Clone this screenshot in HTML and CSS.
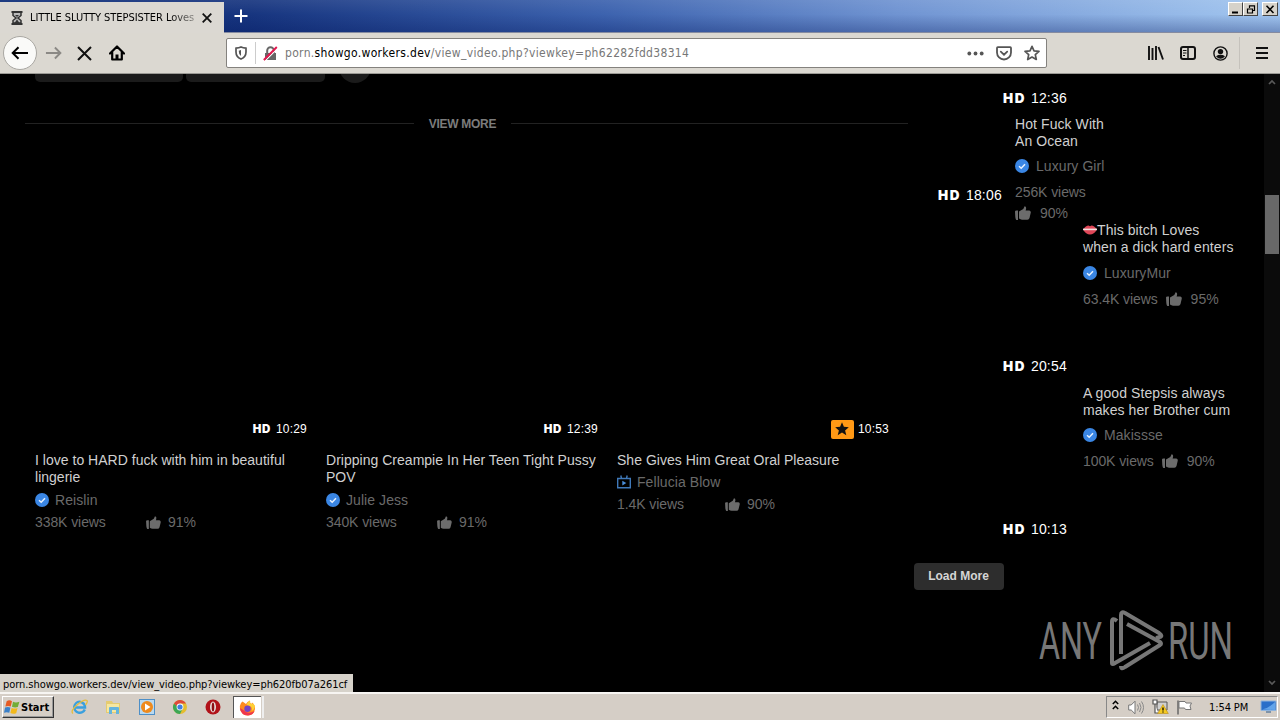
FILE: index.html
```html
<!DOCTYPE html>
<html lang="en">
<head>
<meta charset="utf-8">
<title>Browser</title>
<link rel="stylesheet" href="styles.css">
</head>
<body>
<svg width="0" height="0" class="defs">
  <defs>
    <symbol id="check" viewBox="0 0 14 14"><circle cx="7" cy="7" r="7" fill="#3a86e4"/><path d="M4 7.2l2.200 2L10 5.200" fill="none" stroke="#e8f2ff" stroke-width="1.500"/></symbol>
    <symbol id="thumb" viewBox="0 0 16 14"><path d="M0 5.500Q0 4.500 1.500 4.500H3V14H1.300Q.6 13.500.3 11zM4 5.600L8.300 3 9.600.3Q11.600.6 11 3.200L10.600 4.500H14.400Q16 5 15.800 6.600L14.500 12Q14 13.600 12.400 13.700H7Q5.500 13.400 4 12.600z" fill="#6c6c6c"/></symbol>
  </defs>
</svg>

<header class="titlebar">
  <div class="tab">
    <svg class="hourglass" width="12" height="14" viewBox="0 0 12 14"><path d="M.5 1h11M.5 13h11" stroke="#333" stroke-width="2"/><path d="M2 2v2.500L5 7 2 9.500V12h8V9.500L7 7l3-2.500V2" fill="#bbb" stroke="#333" stroke-width="1.500"/><path d="M4 4h4L6 6zM3.500 12L6 8.500 8.500 12z" fill="#333"/></svg>
    <span class="tab-title">LITTLE SLUTTY STEPSISTER Loves</span>
    <svg class="tab-close" width="10" height="10" viewBox="0 0 10 10"><path d="M.7.7l8.600 8.600M9.300.7L.7 9.300" stroke="#111" stroke-width="1.800"/></svg>
  </div>
  <svg class="newtab" width="14" height="14" viewBox="0 0 14 14"><path d="M7 .5v13M.5 7h13" stroke="#fff" stroke-width="2"/></svg>
  <div class="winbtns">
    <span class="wb"><svg width="10" height="9"><path d="M1 7.500h6" stroke="#000" stroke-width="2"/></svg></span>
    <span class="wb"><svg width="10" height="9"><path d="M3.500 3V.9h5V5.500H6.500M3 1h6M1 4h5.500M1.500 4v4h5V4z" fill="none" stroke="#000" stroke-width="1.200"/></svg></span>
    <span class="wb gap"><svg width="10" height="9"><path d="M1.500 .8l7 7.200M8.500 .8l-7 7.200" stroke="#000" stroke-width="1.600"/></svg></span>
  </div>
</header>

<nav class="toolbar">
  <span class="back"><svg width="18" height="14" viewBox="0 0 18 14"><path d="M17 7H2M7.500 1.200L1.700 7l5.800 5.800" fill="none" stroke="#000" stroke-width="2"/></svg></span>
  <svg class="fwd" width="17" height="14" viewBox="0 0 18 14"><path d="M1 7h15M10.500 1.200L16.300 7l-5.800 5.800" fill="none" stroke="#8b8985" stroke-width="2"/></svg>
  <svg class="stop" width="15" height="15" viewBox="0 0 15 15"><path d="M1 1l13 13M14 1L1 14" stroke="#111" stroke-width="2"/></svg>
  <svg class="home" width="16" height="16" viewBox="0 0 16 16"><path d="M1 8.500L8 1.500l7 7M3.200 7.500V14.500h9.600V7.500" fill="none" stroke="#000" stroke-width="2.200" stroke-linejoin="round" stroke-linecap="round"/><path d="M6.500 14V9.500h3V14" fill="#000"/></svg>
  <div class="urlbar">
    <svg class="shield" width="12" height="14" viewBox="0 0 12 14"><path d="M6 1Q8 2 11 2.200V6Q11 11 6 13 1 11 1 6V2.200Q4 2 6 1z" fill="none" stroke="#555" stroke-width="1.700"/><path d="M6 4v6Q3.700 8.500 3.700 4.700z" fill="#555"/></svg>
    <span class="sep"></span>
    <svg class="lock" width="15" height="15" viewBox="0 0 15 15"><path d="M2 7h11v7H2z" fill="#666"/><path d="M4.200 7V4.500a3.300 3.300 0 016.600 0V7" fill="none" stroke="#666" stroke-width="2"/><path d="M2.400 14.600L14.800 2.200" stroke="#fff" stroke-width="1.200"/><path d="M.8 14L13.800 1" stroke="#e2184f" stroke-width="1.900"/></svg>
    <span class="url">porn.<b>showgo.workers.dev</b>/view_video.php?viewkey=ph62282fdd38314</span>
    <svg class="dots" width="17" height="5" viewBox="0 0 17 5"><g fill="#555"><circle cx="2.300" cy="2.500" r="1.900"/><circle cx="8.500" cy="2.500" r="1.900"/><circle cx="14.700" cy="2.500" r="1.900"/></g></svg>
    <svg class="pocket" width="16" height="15" viewBox="0 0 16 15"><path d="M1.800 1.200h12.400q.8 0 .8.800v4.500a7 7 0 01-14 0V2q0-.8.800-.8z" fill="none" stroke="#555" stroke-width="1.800"/><path d="M4.800 5.700L8 8.700l3.200-3" fill="none" stroke="#555" stroke-width="1.800" stroke-linecap="round"/></svg>
    <svg class="star" width="16" height="16" viewBox="0 0 16 16"><path d="M8 1.300l2 4.500 5 .5-3.700 3.300 1 4.900L8 12l-4.300 2.500 1-4.900L1 6.300l5-.5z" fill="none" stroke="#555" stroke-width="1.700" stroke-linejoin="round"/></svg>
  </div>
  <svg class="library" width="16" height="14" viewBox="0 0 16 14"><path d="M1 0v14M4.500 2v12M8 0v14M10.500 1l4.500 12.500" stroke="#111" stroke-width="1.900"/></svg>
  <svg class="sidebars" width="16" height="14" viewBox="0 0 16 14"><rect x="1" y="1" width="14" height="12" rx="2" fill="none" stroke="#111" stroke-width="2"/><path d="M8 1v12" stroke="#111" stroke-width="1.500"/><path d="M3 4.500h3.500M3 7h3.500M3 9.500h2" stroke="#111"/></svg>
  <svg class="account" width="15" height="15" viewBox="0 0 15 15"><circle cx="7.500" cy="7.500" r="6.600" fill="none" stroke="#111" stroke-width="1.400"/><circle cx="7.500" cy="5.600" r="2.700" fill="#111"/><path d="M3 10.200Q5 8.800 7.500 8.800T12 10.200Q10 12.800 7.500 12.800T3 10.200z" fill="#111"/></svg>
  <span class="tsep"></span>
  <svg class="menu" width="12" height="12" viewBox="0 0 12 12"><path d="M0 1h12M0 6h12M0 11h12" stroke="#111" stroke-width="2"/></svg>
</nav>

<div class="viewport">
  <main class="page">
    <section class="videos">
      <div class="pills"><i class="p1"></i><i class="p2"></i><i class="p3"></i></div>
      <div class="viewmore"><hr><span>VIEW MORE</span><hr></div>
      <div class="cards">
        <article class="card">
          <div class="badge"><b>HD</b><time>10:29</time></div>
          <h3>I love to HARD fuck with him in beautiful<br>lingerie</h3>
          <div class="who"><svg width="14" height="14"><use href="#check"/></svg>Reislin</div>
          <div class="stats"><span class="n">338K views</span><svg width="15" height="13"><use href="#thumb"/></svg><span>91%</span></div>
        </article>
        <article class="card">
          <div class="badge"><b>HD</b><time>12:39</time></div>
          <h3>Dripping Creampie In Her Teen Tight Pussy<br>POV</h3>
          <div class="who"><svg width="14" height="14"><use href="#check"/></svg>Julie Jess</div>
          <div class="stats"><span class="n">340K views</span><svg width="15" height="13"><use href="#thumb"/></svg><span>91%</span></div>
        </article>
        <article class="card">
          <div class="badge"><span class="premium"><svg width="14" height="14" viewBox="0 0 14 14"><path d="M7 .3l1.900 4.500 4.900.4-3.700 3.200 1.200 4.800L7 10.600l-4.300 2.600 1.200-4.800L.2 5.200l4.900-.4z" fill="#111"/></svg></span><time>10:53</time></div>
          <h3>She Gives Him Great Oral Pleasure</h3>
          <div class="who tv"><svg width="14" height="14" viewBox="0 0 14 14"><path d="M.7 3.500h12.600v9.200H.7zM4.500 3.200L3.800.5M9.500 3.200l.7-2.700" fill="none" stroke="#3f78b8" stroke-width="1.400"/><path d="M5.300 5.700v4.800L9.300 8z" fill="#4b8fda"/></svg>Fellucia Blow</div>
          <div class="stats short"><span class="n">1.4K views</span><svg width="15" height="13"><use href="#thumb"/></svg><span>90%</span></div>
        </article>
      </div>
    </section>

    <aside class="related">
      <div class="badge first"><b>HD</b><time>12:36</time></div>
      <div class="pair">
        <div class="badge"><b>HD</b><time>18:06</time></div>
        <article class="item">
          <h3>Hot Fuck With<br>An Ocean</h3>
          <div class="who"><svg width="14" height="14"><use href="#check"/></svg>Luxury Girl</div>
          <div class="n">256K views</div>
          <div class="stats"><svg width="16" height="14"><use href="#thumb"/></svg><span>90%</span></div>
        </article>
      </div>
      <article class="item far">
        <h3><svg class="lips" width="14" height="10" viewBox="0 0 14 10"><path d="M0 4.500Q3 .5 5.500 .5L7 1.200 8.500.5Q11 .5 14 4.500 11 9.500 7 9.500T0 4.500z" fill="#df4657"/><path d="M0 4.400h14" stroke="#f4dede" stroke-width="1.600"/></svg>This bitch Loves<br>when a dick hard enters</h3>
        <div class="who low"><svg width="14" height="14"><use href="#check"/></svg>LuxuryMur</div>
        <div class="stats"><span class="n">63.4K views</span><svg width="16" height="14"><use href="#thumb"/></svg><span>95%</span></div>
      </article>
      <div class="badge second"><b>HD</b><time>20:54</time></div>
      <article class="item far">
        <h3>A good Stepsis always<br>makes her Brother cum</h3>
        <div class="who"><svg width="14" height="14"><use href="#check"/></svg>Makissse</div>
        <div class="stats"><span class="n">100K views</span><svg width="16" height="14"><use href="#thumb"/></svg><span>90%</span></div>
      </article>
      <div class="badge third"><b>HD</b><time>10:13</time></div>
      <button class="load">Load More</button>
    </aside>
  </main>
  <div class="scroll">
    <svg width="8" height="6"><path d="M1 5l3-3 3 3" fill="none" stroke="#5a5a5a" stroke-width="1.700"/></svg>
    <i class="thumbbar"></i>
    <svg width="8" height="6"><path d="M1 1l3 3 3-3" fill="none" stroke="#5a5a5a" stroke-width="1.700"/></svg>
  </div>
  <svg class="watermark" width="200" height="64" viewBox="0 0 200 64">
    <g fill="#777" font-family="Roboto, sans-serif" font-weight="400" font-size="51">
      <text x="1" y="50" textLength="63" lengthAdjust="spacingAndGlyphs">ANY</text>
      <text x="130" y="50" textLength="65" lengthAdjust="spacingAndGlyphs">RUN</text>
    </g>
    <path d="M79 12Q74 8 74 13V54Q74 56 77 54L112 34M83 45V6Q83 2 87 4L121 24Q125 27 122 28M122 28L118 29M89 15L122 33Q124 35 122 36L87 58Q83 61 83 57" fill="none" stroke="#777" stroke-width="4" stroke-linejoin="round"/>
  </svg>
  <div class="status">porn.showgo.workers.dev/view_video.php?viewkey=ph620fb07a261cf</div>
</div>

<footer class="taskbar">
  <div class="start"><svg width="17" height="16" viewBox="0 0 16 15"><path d="M2.500 2Q5 .5 7.500 2L6.300 7Q4 6 1.300 7z" fill="#e65a22"/><path d="M8.500 2.500Q11 4 14.500 2.500L13 7.500Q10.500 8.500 7.500 7.300z" fill="#72ad38"/><path d="M1 8Q3.500 7 6 8L5 13Q2.500 12 0 13z" fill="#3b80c8"/><path d="M7.200 8.400Q10 9.600 12.700 8.500L11.500 13.300Q8.500 14.500 6 13.200z" fill="#f3b91b"/></svg>Start</div>
  <div class="launch">
    <svg width="17" height="16" viewBox="0 0 17 16"><path d="M13.800 10.500A5.500 5.500 0 118.500 2.800Q14 3.500 14 8.500H4" fill="none" stroke="#3aa0de" stroke-width="2.500"/><path d="M2 14.500Q-1 12 6 6T16 1.500Q17 3 14.500 6" fill="none" stroke="#e6bd3c" stroke-width="1.300"/></svg>
    <svg width="17" height="16" viewBox="0 0 17 16"><path d="M1 2h6l1 2h7v10H1z" fill="#e5cb70"/><path d="M2 5h12v8H2z" fill="#f6e7a0"/><path d="M4 15V9q0-1 1-1h8q1 0 1 1v6h-3v-4H7v4z" fill="#65b4dd"/></svg>
    <svg width="16" height="16" viewBox="0 0 16 16"><rect x=".5" y=".5" width="15" height="15" fill="#b9d9f0" stroke="#4d8fc7"/><circle cx="8" cy="8" r="6" fill="#ee8a1d"/><path d="M6 4.500v7L11.500 8z" fill="#fff"/></svg>
    <svg width="16" height="16" viewBox="0 0 16 16"><circle cx="8" cy="8" r="7" fill="#e5bd2e"/><path d="M8 8L5 7 2 4.400A7 7 0 008 15l2.500-5z" fill="#3da755"/><path d="M2 4.500A7 7 0 0114 4.500H8L6 8z" fill="#dd4a3b"/><circle cx="8" cy="8" r="3.400" fill="#fff"/><circle cx="8" cy="8" r="2.600" fill="#3f7fe0"/></svg>
    <svg width="16" height="16" viewBox="0 0 16 16"><circle cx="8" cy="8" r="7.500" fill="#b11219"/><ellipse cx="8" cy="8" rx="3" ry="5.400" fill="#e9e0dd"/><ellipse cx="8" cy="8" rx="1.300" ry="4.600" fill="#8c0d13"/></svg>
  </div>
  <div class="active"><svg width="17" height="16" viewBox="0 0 17 16"><path d="M2 3Q0 6 1 10 3.500 15.500 9 15.500 15 15 16 9 16.300 5 13 2.500L12.500 4Q10.500 3 11 .5 8 1.500 7 4L3.500 1.500z" fill="#ff8a1f"/><path d="M1 8Q2 15.500 9 15.500 14 15 15.500 11 11 14 7 12 3 9 1 8z" fill="#f0364e"/><path d="M11 .5Q8 2 7.500 5L11 6Q14 8 12.500 11 15.500 10 16 6 14 2.500 12.500 4 10.500 3 11 .5z" fill="#ffcf35"/><circle cx="8.500" cy="8.800" r="3.200" fill="#7445c5"/></svg></div>
  <i class="edge"></i>
  <div class="tray">
    <svg class="up" width="7" height="10" viewBox="0 0 7 10"><path d="M.8 4L3.500 1.300 6.200 4M.8 9L3.500 6.300 6.200 9" fill="none" stroke="#000" stroke-width="1.500"/></svg>
    <svg width="17" height="15" viewBox="0 0 17 15"><path d="M.7 5h2.500L7 1.200v12.600L3.200 10H.7z" fill="#fff" stroke="#777"/><path d="M9.500 4.500q2 3 0 6M11.500 3q3 4.500 0 9M13.500 1.500q4 6 0 12" fill="none" stroke="#888"/></svg>
    <svg width="17" height="16" viewBox="0 0 17 16"><path d="M5 3h10v8H5z" fill="#d0d0d0" stroke="#555"/><path d="M1 1v4h4V1zM3 5v9h3" fill="#fff" stroke="#555" stroke-width="1.200"/><path d="M11 5.500l5.300 9H5.700z" fill="#f5ca20" stroke="#bb8c10" stroke-width=".6"/><path d="M11 8.500v3M11 12.500v1" stroke="#000" stroke-width="1.300"/></svg>
    <svg width="17" height="15" viewBox="0 0 17 15"><path d="M2 .5v14" stroke="#666" stroke-width="1.500"/><path d="M3 1.500h6l1 1.500h5.500L14 6l1 3.500H9.500L8.500 8H3z" fill="#fff" stroke="#777"/></svg>
    <span class="clock">1:54 PM</span>
    <svg width="17" height="14" viewBox="0 0 17 14"><path d="M1 1h15v9.500H1z" fill="#2a6fc9" stroke="#8fb4dd"/><path d="M2 9.500Q9 8 15 2V10z" fill="#62a4ea"/><path d="M6 11h5v2H6z" fill="#7f93a8"/></svg>
  </div>
</footer>
</body>
</html>
```
FILE: styles.css
```css
* { box-sizing: border-box; }
body { margin: 0; width: 1280px; height: 720px; overflow: hidden; display: flex; flex-direction: column; background: #000; font-family: "Liberation Sans", sans-serif; }
svg { flex: none; display: block; }
.defs { position: absolute; }

.titlebar { height: 33px; flex: none; display: flex; align-items: flex-start; background: linear-gradient(rgba(255,255,255,.08), rgba(255,255,255,0) 45%, rgba(0,20,90,.3)), linear-gradient(90deg, #0c2c78 0, #17357f 250px, #3c62ae 600px, #7094d2 900px, #9cc0ec 1230px, #a2c6f0); border-bottom: 1px solid #858ba0; }
.tab { width: 224px; height: 31px; margin-top: 2px; background: #dbd8d2; display: flex; align-items: center; padding-left: 11px; }
.tab-title { margin-left: 7px; width: 166px; overflow: hidden; white-space: nowrap; font: 11px "DejaVu Sans Condensed", "DejaVu Sans", sans-serif; letter-spacing: -.05px; -webkit-mask-image: linear-gradient(90deg, #000 140px, rgba(0,0,0,.3)); mask-image: linear-gradient(90deg, #000 140px, rgba(0,0,0,.3)); }
.tab-close { margin-left: 6px; }
.newtab { margin: 9px 0 0 10px; }
.winbtns { display: flex; margin: 2px 2px 0 auto; }
.wb { width: 15px; height: 14px; background: #d6d2ca; border: 1px solid; border-color: #fff #444 #444 #fff; padding: 2px 0 0 2px; }
.wb.gap { width: 16px; margin-left: 4px; }

.toolbar { height: 41px; flex: none; background: #dbd8d1; border-bottom: 1px solid #9b9a95; display: flex; align-items: center; padding-left: 3px; }
.back { width: 34px; height: 34px; border-radius: 50%; background: #fafaf8; border: 1px solid #a9a7a2; display: grid; place-items: center; }
.fwd { margin-left: 8px; }
.stop { margin-left: 15px; }
.home { margin-left: 17px; }
.urlbar { margin-left: 101px; width: 821px; height: 30px; background: #fff; border: 1px solid #84827e; border-radius: 2px; display: flex; align-items: center; padding-left: 8px; }
.sep { width: 1px; height: 22px; background: #ccc; margin-left: 8px; }
.lock { margin-left: 7px; }
.url { margin-left: 7px; width: 682px; white-space: nowrap; color: #777; font: 12px "DejaVu Sans Condensed", "DejaVu Sans", sans-serif; letter-spacing: .33px; }
.url b { font-weight: 400; color: #000; }
.pocket { margin-left: 12px; }
.star { margin-left: 12px; }
.library { margin-left: 101px; }
.sidebars { margin-left: 16px; }
.account { margin-left: 17px; }
.tsep { width: 1px; height: 32px; background: #c5c2bc; margin-left: 11px; }
.menu { margin-left: 16px; }

.viewport { height: 618px; flex: none; display: flex; position: relative; }
.page { width: 1264px; display: flex; }
.videos { width: 914px; }
.pills { display: flex; height: 9px; padding-left: 35px; overflow: hidden; }
.pills i { background: #1b1b1b; height: 8px; border-radius: 0 0 5px 5px; }
.p1 { width: 148px; }
.p2 { width: 139px; margin-left: 3px; }
.pills .p3 { width: 32px; height: 32px; border-radius: 50%; margin: -23px 0 0 14px; flex: none; }
.viewmore { margin: 31px 6px 0 25px; height: 18px; display: flex; align-items: center; color: #7c7c7c; font-size: 12px; font-weight: 700; }
.viewmore hr { flex: none; border: 0; height: 1px; background: #222; margin: 0; width: 389px; }
.viewmore hr:last-child { width: 397px; }
.viewmore span { width: 97px; padding-top: 2px; text-align: center; letter-spacing: -.3px; }
.cards { display: grid; grid-template-columns: repeat(3, 291px); margin: 287px 0 0 35px; }
.badge { display: flex; align-items: center; height: 20px; color: #fff; }
.badge b { font-family: Inter, sans-serif; font-weight: 900; }
.card .badge { width: 272px; justify-content: flex-end; font-size: 12px; letter-spacing: .2px; }
.card .badge b { font-size: 11.500px; margin-right: 5px; letter-spacing: .6px; }
.premium { width: 23px; height: 19px; background: #ff9915; border-radius: 2px; display: grid; place-items: center; margin-right: 4px; }
h3 { margin: 0; font-size: 14px; font-weight: 400; line-height: 17px; color: #d0d0d0; white-space: nowrap; letter-spacing: .08px; }
.card h3 { margin-top: 13px; letter-spacing: .02px; }
.who { display: flex; align-items: center; height: 22px; gap: 6px; color: #6a6a6a; font-size: 14px; letter-spacing: .07px; }
.card .who { margin-top: 2px; height: 24px; }
.card .who.tv { height: 24px; margin-top: 1px; }
.stats { display: flex; align-items: center; height: 20px; font-size: 14px; color: #6a6a6a; }
.n { color: #6a6a6a; font-size: 14px; letter-spacing: -.08px; }
.card .n { width: 111px; }
.card .short .n { width: 108px; }
.card .stats svg { margin-right: 7px; }

.related { width: 350px; display: flex; flex-direction: column; align-items: flex-start; }
.related .badge { font-size: 14px; letter-spacing: .2px; }
.related .badge b { font-size: 13.500px; margin-right: 5px; letter-spacing: 1.500px; }
.related .first { margin: 14px 0 0 89px; }
.pair { display: flex; margin: 8px 0 0 24px; height: 106px; }
.pair .badge { width: 77px; margin-top: 69px; }
.item .who { margin-top: 5px; gap: 7px; }
.item .who.low { margin-top: 6px; }
.item .n { line-height: 20px; }
.pair .who { margin-bottom: 5px; }
.pair .stats { margin-top: 1px; }
.pair .stats svg { margin-right: 9px; }
.far { margin-left: 169px; height: 135px; }
.far .stats { margin-top: 5px; }
.far .stats svg { margin: 0 9px 0 8px; }
.lips { display: inline-block; }
.related .second { margin: -1px 0 0 89px; }
.second + .far { margin-top: 9px; }
.related .third { margin: -1px 0 0 89px; }
.load { margin-top: 24px; width: 90px; height: 27px; border: 0; border-radius: 4px; background: #2d2d2d; color: #d5d5d5; font: 700 12px "Liberation Sans", sans-serif; padding: 0 1px 2px 0; }

.scroll { width: 16px; background: #0b0b0b; display: flex; flex-direction: column; align-items: center; padding: 5px 0 6px; }
.thumbbar { width: 14px; height: 59px; background: #686868; margin: 110px 0 auto; }
.watermark { position: absolute; left: 1038px; top: 535px; }
.status { position: absolute; left: 0; bottom: 0; width: 353px; height: 18px; background: #d6d2ca; padding: 3px 0 0 3px; white-space: nowrap; font: 11px/15px "DejaVu Sans Condensed", "DejaVu Sans", sans-serif; letter-spacing: -.06px; }

.taskbar { height: 28px; flex: none; background: #d5cec6; border-top: 2px solid #f7f5f2; display: flex; align-items: center; padding-left: 2px; }
.start { width: 52px; height: 22px; border: 1px solid; border-color: #fff #333 #333 #fff; display: flex; align-items: center; padding-left: 1px; font: 700 11px "DejaVu Sans Condensed", sans-serif; box-shadow: inset -1px -1px #999; }
.launch { display: flex; gap: 17px; margin-left: 17px; width: 162px; }
.active { width: 28px; height: 22px; background: #fff; border: 1px solid #555; border-width: 1px 0 0 1px; display: grid; place-items: center; }
.edge { width: 3px; height: 22px; border-right: 2px solid #eee; }
.tray { margin-left: auto; margin-right: 2px; width: 172px; height: 22px; border: 1px solid; border-color: #888 #fff #fff #888; display: flex; align-items: center; padding-left: 5px; gap: 7px; }
.up { margin: 0 2px 5px 0; }
.clock { margin-left: 9px; width: 44px; white-space: nowrap; font: 11px "DejaVu Sans Condensed", "DejaVu Sans", sans-serif; letter-spacing: -.1px; }
```
